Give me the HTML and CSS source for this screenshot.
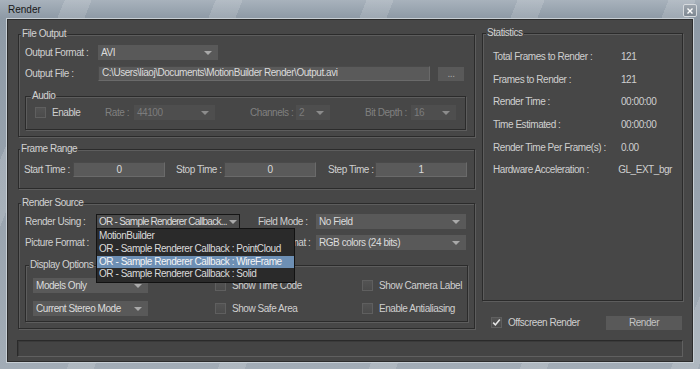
FILE: index.html
```html
<!DOCTYPE html>
<html lang="en">
<head>
  <meta charset="UTF-8">
  <title>Render</title>
  <link rel="stylesheet" href="styles.css">
</head>
<body>
  <div class="window">
    <!-- Title bar -->
    <div class="titlebar">
      <span class="title">Render</span>
      <button class="close" aria-label="Close">
        <svg width="6" height="6" viewBox="0 0 6 6"><path d="M0.5 0.5L5.5 5.5M5.5 0.5L0.5 5.5" stroke="#fff" stroke-width="1.4"/></svg>
      </button>
    </div>

    <div class="client">
      <div class="columns">
        <div class="left">
          <!-- File Output -->
          <fieldset class="group file-output">
            <legend>File Output</legend>
            <div class="row">
              <span class="lbl lbl-file">Output Format :</span>
              <div class="combo w-format"><span>AVI</span></div>
            </div>
            <div class="row row-path">
              <span class="lbl lbl-file">Output File :</span>
              <div class="field path">C:\Users\liaoj\Documents\MotionBuilder Render\Output.avi</div>
              <button class="btn browse">...</button>
            </div>
            <fieldset class="group audio">
              <legend>Audio</legend>
              <div class="row">
                <label class="check enable"><span class="box"></span>Enable</label>
                <span class="lbl dim w-rate">Rate :</span>
                <div class="combo disabled w-rate-box"><span>44100</span></div>
                <span class="lbl dim w-chan">Channels :</span>
                <div class="combo disabled w-chan-box"><span>2</span></div>
                <span class="lbl dim w-chan">Bit Depth :</span>
                <div class="combo disabled w-depth-box"><span>16</span></div>
              </div>
            </fieldset>
          </fieldset>

          <!-- Frame Range -->
          <fieldset class="group frame-range">
            <legend>Frame Range</legend>
            <div class="row">
              <span class="lbl w-start">Start Time :</span>
              <div class="field num">0</div>
              <span class="lbl w-stop">Stop Time :</span>
              <div class="field num">0</div>
              <span class="lbl w-step">Step Time :</span>
              <div class="field num">1</div>
            </div>
          </fieldset>

          <!-- Render Source -->
          <fieldset class="group render-source">
            <legend>Render Source</legend>
            <div class="row">
              <span class="lbl w-using">Render Using :</span>
              <div class="combo open w-using-box">
                <span class="clip">OR - Sample Renderer Callback...</span>
                <ul class="menu">
                  <li>MotionBuilder</li>
                  <li>OR - Sample Renderer Callback : PointCloud</li>
                  <li class="selected">OR - Sample Renderer Callback : WireFrame</li>
                  <li>OR - Sample Renderer Callback : Solid</li>
                </ul>
              </div>
              <span class="lbl w-field">Field Mode :</span>
              <div class="combo w-field-box"><span>No Field</span></div>
            </div>
            <div class="row row-second">
              <span class="lbl w-using">Picture Format :</span>
              <div class="combo w-using-box"><span></span></div>
              <span class="lbl w-pixel">Pixel Format :</span>
              <div class="combo w-field-box"><span>RGB colors (24 bits)</span></div>
            </div>
            <fieldset class="group display-options">
              <legend>Display Options</legend>
              <div class="options">
                <div class="combo w-models"><span>Models Only</span></div>
                <label class="check"><span class="box"></span>Show Time Code</label>
                <label class="check"><span class="box"></span>Show Camera Label</label>
                <div class="combo w-models"><span>Current Stereo Mode</span></div>
                <label class="check"><span class="box"></span>Show Safe Area</label>
                <label class="check"><span class="box"></span>Enable Antialiasing</label>
              </div>
            </fieldset>
          </fieldset>
        </div>

        <div class="right">
          <!-- Statistics -->
          <fieldset class="group stats">
            <legend>Statistics</legend>
            <dl class="stat-list">
              <div class="stat"><dt>Total Frames to Render :</dt><dd>121</dd></div>
              <div class="stat"><dt>Frames to Render :</dt><dd>121</dd></div>
              <div class="stat"><dt>Render Time :</dt><dd>00:00:00</dd></div>
              <div class="stat"><dt>Time Estimated :</dt><dd>00:00:00</dd></div>
              <div class="stat"><dt>Render Time Per Frame(s) :</dt><dd>0.00</dd></div>
              <div class="stat"><dt>Hardware Acceleration :</dt><dd>GL_EXT_bgr</dd></div>
            </dl>
          </fieldset>

          <div class="render-row">
            <label class="check"><span class="box">
              <svg width="9" height="9" viewBox="0 0 9 9"><path d="M1.2 4.6L3.4 6.9L7.8 1.6" fill="none" stroke="#e6e6e6" stroke-width="1.6"/></svg>
            </span>Offscreen Render</label>
            <button class="btn render">Render</button>
          </div>
        </div>
      </div>

      <!-- Status bar -->
      <div class="statusbar"></div>
    </div>
  </div>
</body>
</html>
```

FILE: styles.css
```css
/* General */
* {
  box-sizing: border-box;
}
body {
  margin: 0;
  font-family: "Liberation Sans", Arial, sans-serif;
  font-size: 10px;
  letter-spacing: -0.45px;
  color: #cfcfcf;
  background: #9aa5b0;
  overflow: hidden;
}

/* Window frame */
.window {
  width: 700px;
  height: 369px;
  display: flex;
  flex-direction: column;
  background:
    repeating-linear-gradient(112deg, rgba(255, 255, 255, 0) 0 60px, rgba(255, 255, 255, 0.14) 60px 85px, rgba(255, 255, 255, 0) 85px 140px),
    linear-gradient(#a8b2bc, #8e9aa6 18px, #a2acb6);
}
.titlebar {
  height: 19px;
  display: flex;
  justify-content: space-between;
  padding: 0 3px 0 8px;
}
.title {
  align-self: center;
  color: #161616;
  letter-spacing: 0;
}
.close {
  margin-top: 4px;
  width: 14px;
  height: 13px;
  padding: 0;
  display: flex;
  align-items: center;
  justify-content: center;
  border: 1px solid #d6dade;
  border-radius: 2px;
  background: linear-gradient(#9ea6ae, #7d8792);
}
.client {
  margin: 0 7px;
  height: 343px;
  background: #474747;
  border: 1px solid #2c2c2c;
  box-shadow: 0 0 0 1px #c7ced4;
  display: flex;
  flex-direction: column;
}
.columns {
  display: flex;
  gap: 7px;
  padding: 8px 0 0 10px;
}
.left {
  width: 457px;
  display: flex;
  flex-direction: column;
}
.right {
  width: 201px;
  margin-top: -1px;
}

/* Group boxes */
.group {
  margin: 0;
  padding: 0 6px 6px;
  min-width: 0;
  border: 1px solid #2b2b2b;
  box-shadow: 1px 1px 0 #5d5d5d, inset 1px 1px 0 #5d5d5d;
}
.group legend {
  padding: 0 1px;
  margin-left: -4px;
  line-height: 12px;
  background: #474747;
  color: #d2d2d2;
}
.row {
  display: flex;
  align-items: center;
  height: 15px;
  white-space: nowrap;
}
.lbl {
  flex: none;
  overflow: hidden;
}
.dim {
  color: #808080;
}

/* Inputs */
.combo {
  flex: none;
  position: relative;
  height: 15px;
  display: flex;
  align-items: center;
  justify-content: space-between;
  padding: 0 6px 0 3px;
  background: #595959;
  color: #dcdcdc;
  white-space: nowrap;
}
.combo::after {
  content: "";
  flex: none;
  border-left: 4px solid transparent;
  border-right: 4px solid transparent;
  border-top: 4px solid #a9a9a9;
}
.combo.disabled {
  background: #4e4e4e;
  color: #7c7c7c;
}
.combo.disabled::after {
  border-top-color: #8c8c8c;
}
.combo.open {
  background: #4b4b4b;
  border: 1px solid #161616;
  padding: 0 2px;
}
.combo .clip {
  letter-spacing: -0.75px;
}
.field {
  flex: none;
  height: 15px;
  line-height: 13px;
  padding: 0 3px;
  background: #5a5a5a;
  border: 1px solid;
  border-color: #4a4a4a #6a6a6a #6a6a6a #4a4a4a;
  color: #dadada;
}
.field.num {
  width: 92px;
  text-align: center;
}
.btn {
  font: inherit;
  letter-spacing: inherit;
  color: #cfcfcf;
  background: #595959;
  border: none;
  padding: 0;
}
.check {
  display: flex;
  align-items: center;
  gap: 6px;
  white-space: nowrap;
}
.box {
  flex: none;
  width: 11px;
  height: 11px;
  display: flex;
  align-items: center;
  justify-content: center;
  background: linear-gradient(#535353, #4b4b4b);
  border: 1px solid #5f5f5f;
}

/* Dropdown list */
.menu {
  position: absolute;
  top: 100%;
  left: -1px;
  width: 199px;
  margin: 0;
  padding: 1px 0;
  list-style: none;
  background: #2a2a2a;
  border: 1px solid #121212;
  z-index: 2;
}
.menu li {
  height: 12.75px;
  line-height: 12.75px;
  padding-left: 2px;
  color: #dadada;
}
.menu li.selected {
  background: #6d8fb4;
  color: #f4f4f4;
}

/* File Output */
.file-output {
  padding-top: 5px;
}
.lbl-file {
  width: 73px;
}
.w-format {
  width: 120px;
}
.row-path {
  margin-top: 6px;
}
.path {
  width: 332px;
  line-height: 12px;
}
.browse {
  width: 26px;
  height: 14px;
  margin: 1px 0 0 8px;
  line-height: 12px;
  color: #a8a8a8;
}
.audio {
  width: 441px;
  margin-top: 9px;
  padding: 3px 9px 9px;
}
.enable {
  width: 71px;
}
.w-rate {
  width: 29px;
}
.w-rate-box {
  width: 81px;
}
.w-chan {
  width: 46px;
  margin-left: 35px;
}
.w-chan-box {
  width: 34px;
}
.w-depth-box {
  width: 45px;
}

/* Frame Range */
.frame-range {
  margin-top: 6px;
  padding: 7px 5px 11px;
}
.w-start {
  width: 49px;
}
.w-stop {
  width: 48px;
  margin-left: 11px;
}
.w-step {
  width: 47px;
  margin-left: 12px;
}

/* Render Source */
.render-source {
  margin-top: 8px;
  padding-top: 5px;
}
.w-using {
  width: 71px;
}
.w-using-box {
  width: 144px;
}
.w-field {
  width: 58px;
  margin-left: 18px;
}
.w-pixel {
  width: 61px;
  margin-left: 15px;
}
.w-field-box {
  width: 150px;
}
.row-second {
  margin-top: 6px;
}
.display-options {
  width: 443px;
  margin-top: 9px;
  padding: 7px 7px 5px;
}
.options {
  display: grid;
  grid-template-columns: 182px 147px 1fr;
  grid-auto-rows: 15px;
  row-gap: 8px;
  align-items: center;
}
.w-models {
  width: 115px;
}

/* Statistics */
.stats {
  height: 274px;
  padding: 6px 10px 0;
}
.stats legend {
  margin-left: -7px;
}
.stat-list {
  margin: 0;
}
.stat {
  display: flex;
  align-items: center;
  height: 22.7px;
}
.stat dt {
  width: 128px;
}
.stat dd {
  margin: 0;
}
.render-row {
  display: flex;
  align-items: center;
  justify-content: space-between;
  height: 15px;
  margin-top: 14px;
  padding: 0 1px 0 9px;
}
.render {
  width: 76px;
  height: 14px;
  color: #c4c4c4;
}

/* Status bar */
.statusbar {
  height: 17px;
  margin: 10px 9px 0;
  background: #444;
  border: 1px solid;
  border-color: #2a2a2a #606060 #606060 #2a2a2a;
  box-shadow: inset 1px 1px 0 #3a3a3a;
}
```
